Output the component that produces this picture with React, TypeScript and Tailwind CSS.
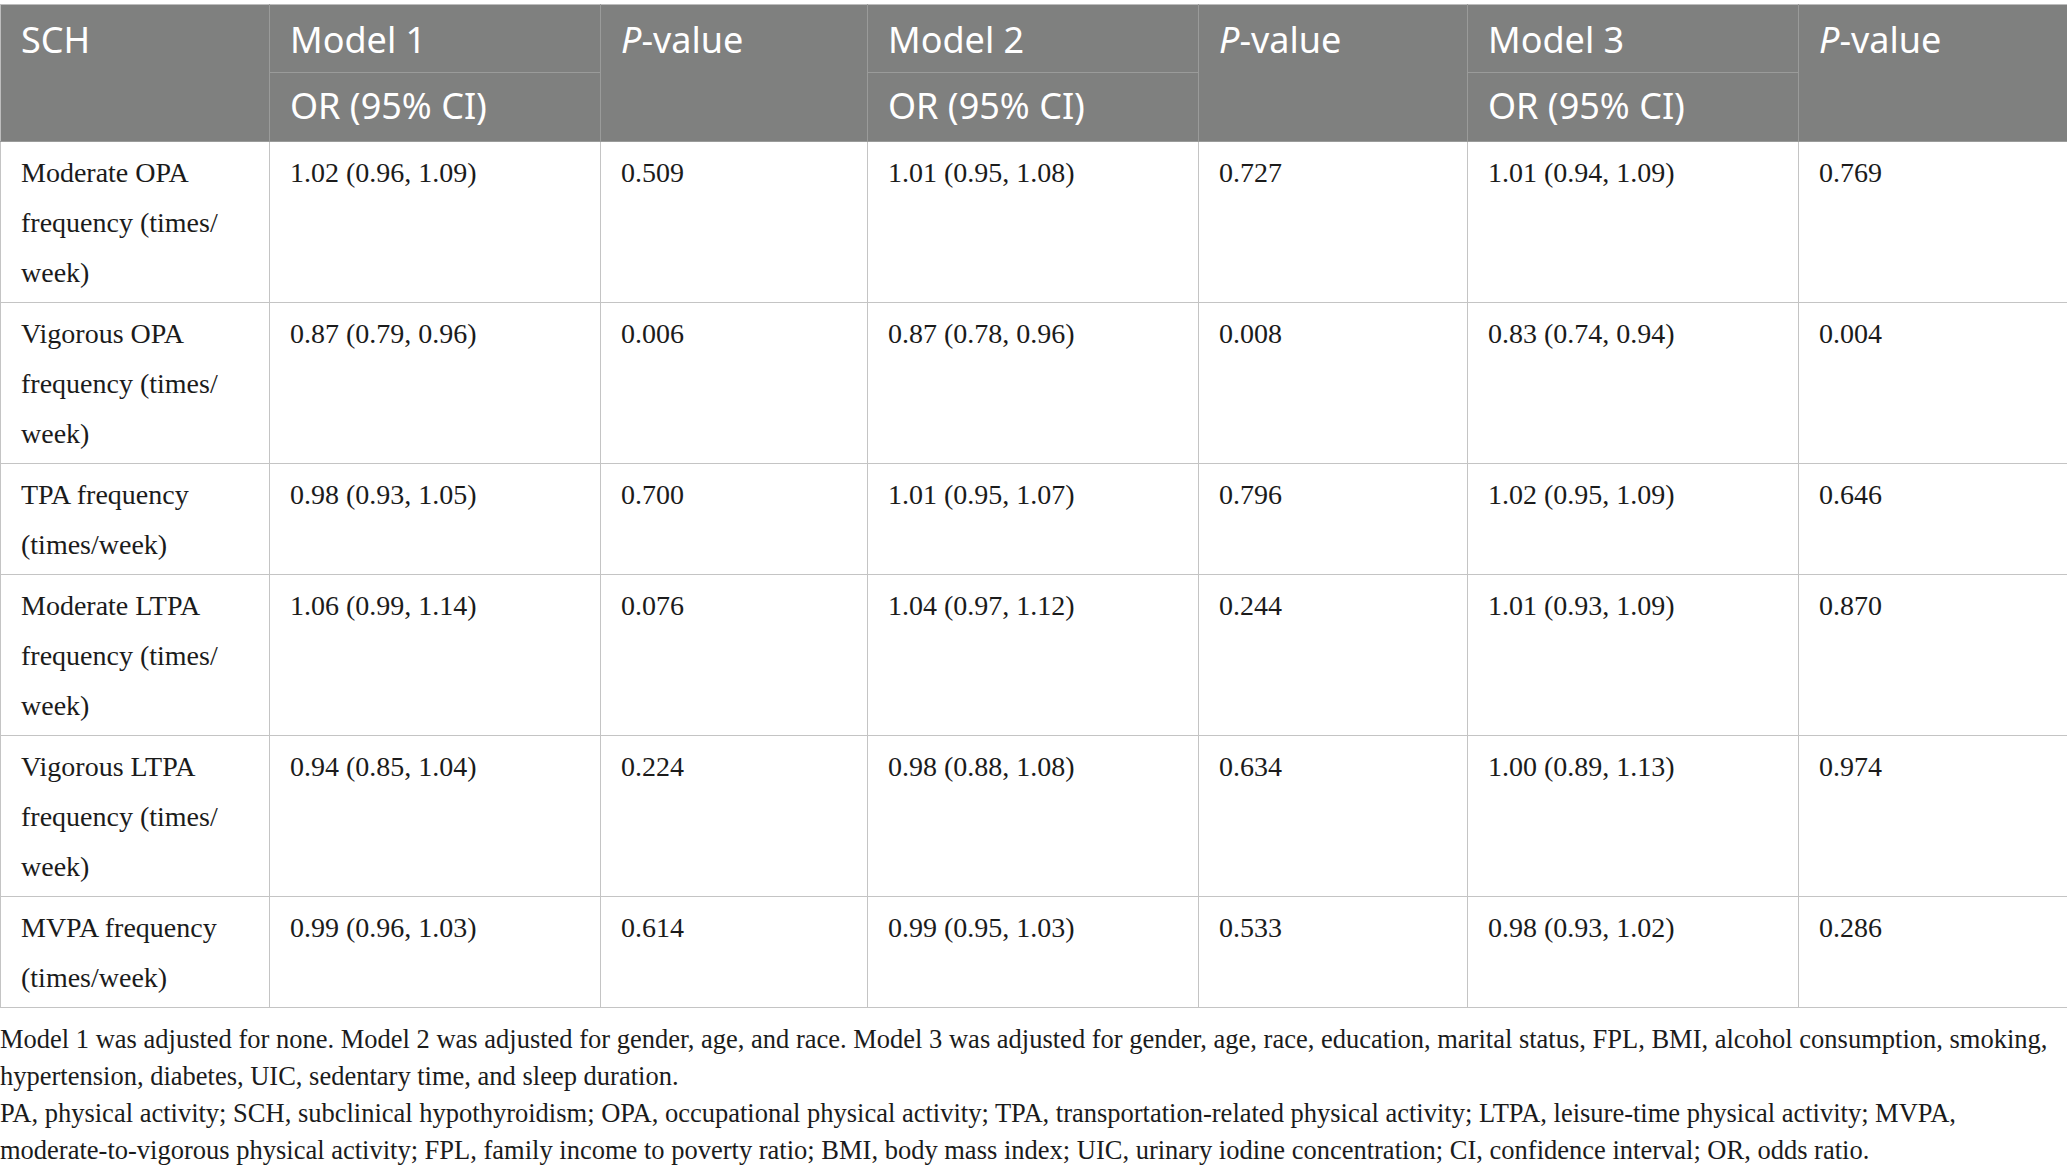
import React from "react";

type Row = { label: string[]; cells: string[] };

const rows: Row[] = [
  { label: ["Moderate OPA", "frequency (times/", "week)"], cells: ["1.02 (0.96, 1.09)", "0.509", "1.01 (0.95, 1.08)", "0.727", "1.01 (0.94, 1.09)", "0.769"] },
  { label: ["Vigorous OPA", "frequency (times/", "week)"], cells: ["0.87 (0.79, 0.96)", "0.006", "0.87 (0.78, 0.96)", "0.008", "0.83 (0.74, 0.94)", "0.004"] },
  { label: ["TPA frequency", "(times/week)"], cells: ["0.98 (0.93, 1.05)", "0.700", "1.01 (0.95, 1.07)", "0.796", "1.02 (0.95, 1.09)", "0.646"] },
  { label: ["Moderate LTPA", "frequency (times/", "week)"], cells: ["1.06 (0.99, 1.14)", "0.076", "1.04 (0.97, 1.12)", "0.244", "1.01 (0.93, 1.09)", "0.870"] },
  { label: ["Vigorous LTPA", "frequency (times/", "week)"], cells: ["0.94 (0.85, 1.04)", "0.224", "0.98 (0.88, 1.08)", "0.634", "1.00 (0.89, 1.13)", "0.974"] },
  { label: ["MVPA frequency", "(times/week)"], cells: ["0.99 (0.96, 1.03)", "0.614", "0.99 (0.95, 1.03)", "0.533", "0.98 (0.93, 1.02)", "0.286"] },
];

const head = "border border-[#9a9b9a] px-[20px] text-left align-top font-normal";

const PValue = () => (
  <>
    <i>P</i>-value
  </>
);

export default function App() {
  return (
    <div className="w-[2067px] bg-white pt-[4px] text-[#1b1b1b]">
      <table className="w-[2067px] table-fixed border-collapse font-['Liberation_Serif',serif] text-[28px] leading-[50px]">
        <colgroup>
          <col className="w-[269px]" />
          <col className="w-[331px]" />
          <col className="w-[267px]" />
          <col className="w-[331px]" />
          <col className="w-[269px]" />
          <col className="w-[331px]" />
          <col className="w-[269px]" />
        </colgroup>
        <thead className="bg-[#7f807f] font-['Noto_Sans',sans-serif] text-[36px] leading-[50px] text-white">
          <tr className="h-[68px]">
            <th rowSpan={2} className={`${head} border-t-[#bdbdbd] border-l-[#bdbdbd] pt-[10px]`}>SCH</th>
            <th className={`${head} border-t-[#bdbdbd] pt-[10px]`}>Model 1</th>
            <th rowSpan={2} className={`${head} border-t-[#bdbdbd] pt-[10px]`}><PValue /></th>
            <th className={`${head} border-t-[#bdbdbd] pt-[10px]`}>Model 2</th>
            <th rowSpan={2} className={`${head} border-t-[#bdbdbd] pt-[10px]`}><PValue /></th>
            <th className={`${head} border-t-[#bdbdbd] pt-[10px]`}>Model 3</th>
            <th rowSpan={2} className={`${head} border-t-[#bdbdbd] border-r-[#bdbdbd] pt-[10px]`}><PValue /></th>
          </tr>
          <tr className="h-[69px]">
            <th className={`${head} pt-[8px]`}>OR (95% CI)</th>
            <th className={`${head} pt-[8px]`}>OR (95% CI)</th>
            <th className={`${head} pt-[8px]`}>OR (95% CI)</th>
          </tr>
        </thead>
        <tbody>
          {rows.map((r, i) => (
            <tr key={i}>
              <td className="border border-[#c4c4c4] px-[20px] pt-[6px] pb-[4px] align-top">
                {r.label.map((l, j) => (
                  <div key={j} className="whitespace-nowrap">{l}</div>
                ))}
              </td>
              {r.cells.map((c, j) => (
                <td key={j} className="border border-[#c4c4c4] px-[20px] pt-[6px] pb-[4px] align-top whitespace-nowrap">
                  {c}
                </td>
              ))}
            </tr>
          ))}
        </tbody>
      </table>

      <div className="mt-[13px] font-['Liberation_Serif',serif] text-[26.5px] leading-[37px] whitespace-nowrap">
        <p>
          Model 1 was adjusted for none. Model 2 was adjusted for gender, age, and race. Model 3 was adjusted for gender, age, race, education, marital status, FPL, BMI, alcohol consumption, smoking,
          <br />
          hypertension, diabetes, UIC, sedentary time, and sleep duration.
        </p>
        <p>
          PA, physical activity; SCH, subclinical hypothyroidism; OPA, occupational physical activity; TPA, transportation-related physical activity; LTPA, leisure-time physical activity; MVPA,
          <br />
          moderate-to-vigorous physical activity; FPL, family income to poverty ratio; BMI, body mass index; UIC, urinary iodine concentration; CI, confidence interval; OR, odds ratio.
        </p>
      </div>
    </div>
  );
}
